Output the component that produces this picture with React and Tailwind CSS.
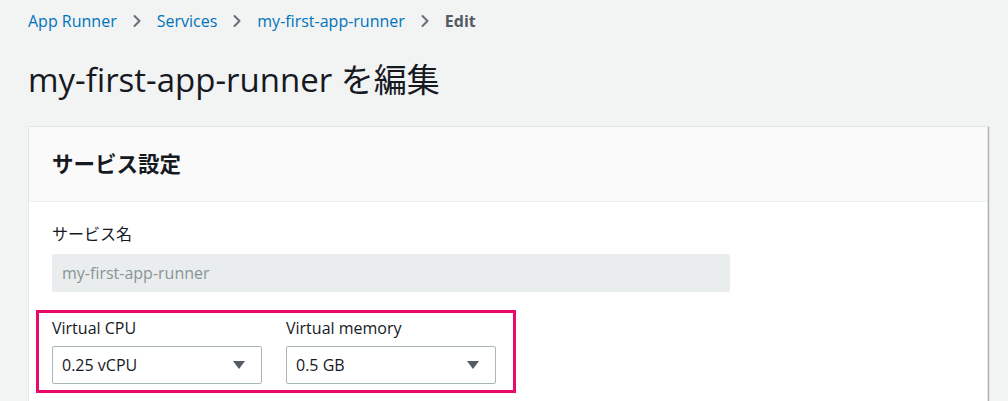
import { ChevronRight } from "lucide-react";

const font = { fontFamily: '"Open Sans", "Noto Sans CJK JP", sans-serif' };

function Crumb({ children, last }) {
  return (
    <span className={last ? "font-bold text-[#545b64]" : "text-[#0073bb]"}>{children}</span>
  );
}

function Sep() {
  return <ChevronRight className="w-5 h-5 text-[#687078] mx-[10px]" strokeWidth={2.5} />;
}

function Select({ value }) {
  return (
    <div className="flex items-center justify-between w-[210px] h-[38px] border border-[#aab7b8] rounded-[2px] bg-white pl-[9px] pr-[15px] text-[16px] text-[#16191f]">
      <span>{value}</span>
      <svg width="14" height="10" viewBox="0 0 14 10">
        <path d="M1 1h12L7 9z" fill="#545b64" />
      </svg>
    </div>
  );
}

export default function App() {
  return (
    <div className="min-h-[401px] bg-[#f2f3f3] px-[28px] pt-[8px] overflow-hidden" style={font}>
      <nav className="flex items-center h-[26px] text-[16px]">
        <Crumb>App Runner</Crumb>
        <Sep />
        <Crumb>Services</Crumb>
        <Sep />
        <Crumb>my-first-app-runner</Crumb>
        <Sep />
        <Crumb last>Edit</Crumb>
      </nav>

      <h1 className="mt-[22px] text-[33px] leading-[48px] text-[#16191f]">my-first-app-runner を編集</h1>

      <div className="mt-[22px] w-[960px] bg-white border border-[#e4e7e7] shadow-[1px_1px_1px_0_rgba(0,28,36,0.3)]">
        <div className="h-[75px] bg-[#fafafa] border-b border-[#eaeded] flex items-center px-[23px]">
          <h2 className="text-[21.5px] font-bold text-[#16191f]">サービス設定</h2>
        </div>
        <div className="px-[23px] pt-[20px] pb-[20px]">
          <div className="text-[16px] leading-[24px] text-[#16191f]">サービス名</div>
          <div className="mt-[8px] w-[678px] h-[38px] bg-[#eaeded] rounded-[2px] flex items-center px-[10px] text-[16px] text-[#879596]">
            my-first-app-runner
          </div>
          <div className="mt-[18px] -ml-[16px] w-[480px] border-[3px] border-[#ea0a6a] px-[13px] pt-[3px] pb-[6px] flex gap-[24px]">
            <div>
              <div className="text-[16px] leading-[24px] text-[#16191f]">Virtual CPU</div>
              <div className="mt-[6px]">
                <Select value="0.25 vCPU" />
              </div>
            </div>
            <div>
              <div className="text-[16px] leading-[24px] text-[#16191f]">Virtual memory</div>
              <div className="mt-[6px]">
                <Select value="0.5 GB" />
              </div>
            </div>
          </div>
        </div>
      </div>
    </div>
  );
}
